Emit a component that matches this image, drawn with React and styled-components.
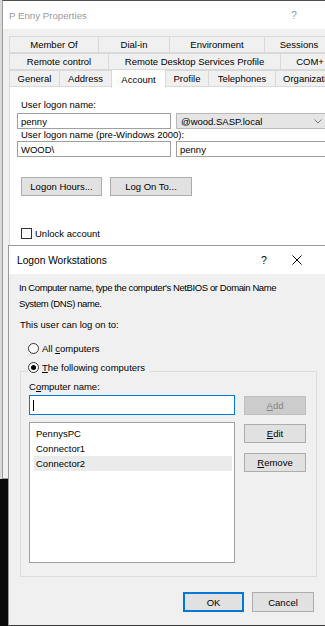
import React from "react";
import styled, { createGlobalStyle } from "styled-components";

const Global = createGlobalStyle`
  html, body { margin: 0; padding: 0; background: #0a0a0a; }
  body { font-family: "Liberation Sans", Arial, sans-serif; font-size: 9.5px; color: #000; }
  * { box-sizing: border-box; }
`;

const Desktop = styled.div`
  position: relative;
  width: 325px;
  height: 626px;
  overflow: hidden;
  background: linear-gradient(to bottom, #d9d9d9 0, #d9d9d9 479px, #0a0a0a 479px);
`;

const PropsWindow = styled.div`
  position: absolute;
  left: 2px;
  top: 0;
  width: 345px;
  height: 479px;
  border: 1px solid #9a9a9a;
  border-top-color: #505050;
  background: #f0f0f0;
  display: flex;
  flex-direction: column;
`;

const TitleBar = styled.div`
  height: ${(p) => p.$h}px;
  flex: none;
  background: #fff;
  display: flex;
  align-items: center;
  padding-left: ${(p) => p.$pl}px;
  padding-right: ${(p) => p.$pr || 0}px;
  color: ${(p) => (p.$active ? "#000" : "#999")};
  font-size: ${(p) => p.$fs || 9.7}px;
`;

const TitleText = styled.div`
  flex: 1;
  white-space: nowrap;
`;

const TitleBtn = styled.div`
  width: ${(p) => p.$w}px;
  text-align: center;
  font-size: ${(p) => p.$fs || 10}px;
  display: flex;
  justify-content: center;
`;

const PropsBody = styled.div`
  flex: 1;
  display: flex;
  flex-direction: column;
  padding: 7px 0 0 6px;
`;

const TabRow = styled.div`
  display: flex;
  height: 17px;
  align-items: flex-end;
  position: relative;
  z-index: ${(p) => p.$z || 0};
`;

const Tab = styled.div`
  flex: none;
  width: ${(p) => p.$w}px;
  height: ${(p) => (p.$sel ? 19 : 17)}px;
  margin-left: -1px;
  margin-bottom: ${(p) => (p.$sel ? -1 : 0)}px;
  border: 1px solid #d9d9d9;
  border-bottom: ${(p) => (p.$sel ? "none" : "1px solid #d9d9d9")};
  background: ${(p) => (p.$sel ? "#fff" : "#f0f0f0")};
  display: flex;
  align-items: center;
  justify-content: center;
  white-space: nowrap;
  overflow: hidden;
  position: relative;
  z-index: ${(p) => (p.$sel ? 2 : 0)};
  &:first-child { margin-left: 0; }
`;

const Panel = styled.div`
  flex: 1;
  background: #fff;
  border: 1px solid #d9d9d9;
  margin-top: -1px;
  padding: 12px 0 0 7px;
  display: flex;
  flex-direction: column;
`;

const FieldLabel = styled.div`
  line-height: 12px;
  height: 12px;
  margin-left: ${(p) => p.$ml ?? 4}px;
  margin-bottom: ${(p) => p.$mb ?? 0}px;
  white-space: nowrap;
`;

const FieldRow = styled.div`
  display: flex;
  gap: 5px;
  margin-top: ${(p) => p.$mt || 0}px;
`;

const TextBox = styled.div`
  width: ${(p) => p.$w}px;
  height: ${(p) => p.$h || 16}px;
  border: 1px solid ${(p) => (p.$focus ? "#0078d7" : "#a0a0a0")};
  background: #fff;
  display: flex;
  align-items: center;
  padding-left: 3px;
  white-space: nowrap;
  flex: none;
`;

const Combo = styled.div`
  width: ${(p) => p.$w}px;
  height: 16px;
  border: 1px solid #b9b9b9;
  background: #e5e5e5;
  display: flex;
  align-items: center;
  padding: 0 6px 0 4px;
  flex: none;
  white-space: nowrap;
  span { flex: 1; }
`;

const ButtonRow = styled.div`
  display: flex;
  gap: ${(p) => p.$gap}px;
  margin-top: ${(p) => p.$mt || 0}px;
  margin-left: ${(p) => p.$ml || 0}px;
  justify-content: ${(p) => p.$justify || "flex-start"};
  padding-right: ${(p) => p.$pr || 0}px;
  width: ${(p) => (p.$w ? `${p.$w}px` : "auto")};
`;

const WinButton = styled.div`
  width: ${(p) => p.$w}px;
  height: ${(p) => p.$h || 19}px;
  flex: none;
  background: ${(p) => (p.$disabled ? "#cccccc" : "#e1e1e1")};
  border: 1px solid ${(p) => (p.$disabled ? "#bfbfbf" : p.$default ? "#0078d7" : "#adadad")};
  box-shadow: ${(p) => (p.$default ? "inset 0 0 0 1px #0078d7" : "none")};
  color: ${(p) => (p.$disabled ? "#838383" : "#000")};
  display: flex;
  align-items: center;
  justify-content: center;
  white-space: nowrap;
`;

const CheckRow = styled.div`
  display: flex;
  align-items: center;
  gap: 3px;
  margin-top: ${(p) => p.$mt || 0}px;
  margin-left: 4px;
  height: 12px;
`;

const CheckBox = styled.div`
  width: 11px;
  height: 11px;
  border: 1px solid #333;
  background: #fff;
  flex: none;
`;

/* ---- Dialog ---- */

const Dialog = styled.div`
  position: absolute;
  left: 8px;
  top: 245px;
  width: 330px;
  height: 381px;
  border: 1px solid #9a9a9a;
  border-bottom: 1px solid #3a3a3a;
  background: #f0f0f0;
  display: flex;
  flex-direction: column;
  z-index: 5;
`;

const DialogBody = styled.div`
  flex: 1;
  padding: 6px 0 0 10px;
  display: flex;
  flex-direction: column;
`;

const Para = styled.div`
  line-height: 16px;
  white-space: nowrap;
  margin-top: ${(p) => p.$mt || 0}px;
  margin-left: ${(p) => p.$ml || 0}px;
  letter-spacing: ${(p) => p.$ls || 0}px;
`;

const RadioRow = styled.label`
  display: flex;
  align-items: center;
  gap: 3px;
  height: 16px;
  margin-top: ${(p) => p.$mt || 0}px;
  margin-left: ${(p) => p.$ml || 0}px;
  white-space: nowrap;
`;

const RadioCircle = styled.span`
  width: 11px;
  height: 11px;
  border-radius: 50%;
  border: 1px solid #333;
  background: #fff;
  flex: none;
  display: flex;
  align-items: center;
  justify-content: center;
  &::after {
    content: "";
    width: 5px;
    height: 5px;
    border-radius: 50%;
    background: ${(p) => (p.$on ? "#000" : "transparent")};
  }
`;

const Group = styled.div`
  width: 297px;
  margin-left: 1px;
  margin-top: 3px;
  display: flex;
  flex-direction: column;
`;

const GroupHead = styled.div`
  display: flex;
  height: 16px;
  align-items: flex-end;
`;

const HeadLine = styled.div`
  height: 4px;
  align-self: flex-end;
  flex: ${(p) => (p.$fill ? 1 : "none")};
  width: ${(p) => (p.$w ? `${p.$w}px` : "auto")};
  margin-left: ${(p) => p.$ml || 0}px;
  border-top: 1px solid #dcdcdc;
  border-left: ${(p) => (p.$left ? "1px solid #dcdcdc" : "none")};
  border-right: ${(p) => (p.$right ? "1px solid #dcdcdc" : "none")};
`;

const GroupLegend = styled.div`
  display: flex;
  align-self: flex-start;
`;

const GroupBody = styled.div`
  border: 1px solid #dcdcdc;
  border-top: none;
  padding: 4px 9px 13px 8px;
  display: flex;
  flex-direction: column;
`;

const GroupGrid = styled.div`
  display: grid;
  grid-template-columns: 206px 62px;
  column-gap: 9px;
  row-gap: 7px;
  align-items: start;
`;

const CenterCell = styled.div`
  align-self: center;
  display: flex;
`;

const ListBox = styled.div`
  height: 141px;
  border: 1px solid #a0a0a0;
  background: #fff;
  padding: 3px 2px 0 4px;
  display: flex;
  flex-direction: column;
`;

const ListItem = styled.div`
  height: 15px;
  line-height: 15px;
  padding-left: 2px;
  background: ${(p) => (p.$sel ? "#ebebeb" : "transparent")};
  white-space: nowrap;
`;

const SideButtons = styled.div`
  display: flex;
  flex-direction: column;
  gap: 10px;
  margin-top: 2px;
`;

const Caret = styled.span`
  display: inline-block;
  width: 1px;
  height: 11px;
  background: #000;
`;

const Mn = styled.span`
  text-decoration: underline;
  text-underline-offset: 1px;
`;

const Chevron = () => (
  <svg width="8" height="5" viewBox="0 0 8 5">
    <path d="M0.5 0.5 L4 4 L7.5 0.5" fill="none" stroke="#777" strokeWidth="1" />
  </svg>
);

const Close = () => (
  <svg width="10" height="10" viewBox="0 0 10 10">
    <path d="M0.5 0.5 L9.5 9.5 M9.5 0.5 L0.5 9.5" stroke="#000" strokeWidth="1" />
  </svg>
);

const rows = [
  [
    ["Member Of", 90],
    ["Dial-in", 72],
    ["Environment", 96],
    ["Sessions", 70],
  ],
  [
    ["Remote control", 100],
    ["Remote Desktop Services Profile", 173],
    ["COM+", 60],
  ],
  [
    ["General", 51],
    ["Address", 53],
    ["Account", 55, true],
    ["Profile", 44],
    ["Telephones", 68],
    ["Organization", 70],
  ],
];

export default function App() {
  return (
    <Desktop>
      <Global />
      <PropsWindow>
        <TitleBar $h={28} $pl={6}>
          <TitleText>P Enny Properties</TitleText>
          <TitleBtn $w={24} $fs={10.5}>?</TitleBtn>
          <TitleBtn $w={40} />
        </TitleBar>
        <PropsBody>
          {rows.map((r, i) => (
            <TabRow key={i} $z={i === 2 ? 3 : 0}>
              {r.map(([t, w, sel]) => (
                <Tab key={t} $w={w} $sel={sel}>
                  {t}
                </Tab>
              ))}
            </TabRow>
          ))}
          <Panel>
            <FieldLabel $mb={2}>User logon name:</FieldLabel>
            <FieldRow>
              <TextBox $w={154}>penny</TextBox>
              <Combo $w={153}>
                <span>@wood.SASP.local</span>
                <Chevron />
              </Combo>
            </FieldRow>
            <FieldLabel>User logon name (pre-Windows 2000):</FieldLabel>
            <FieldRow>
              <TextBox $w={154}>WOOD\</TextBox>
              <TextBox $w={153}>penny</TextBox>
            </FieldRow>
            <ButtonRow $gap={8} $mt={20} $ml={4}>
              <WinButton $w={81}>Logon Hours...</WinButton>
              <WinButton $w={82}>Log On To...</WinButton>
            </ButtonRow>
            <CheckRow $mt={31}>
              <CheckBox />
              <span>Unlock account</span>
            </CheckRow>
          </Panel>
        </PropsBody>
      </PropsWindow>

      <Dialog>
        <TitleBar $h={28} $pl={8} $pr={21} $fs={10.2} $active>
          <TitleText>Logon Workstations</TitleText>
          <TitleBtn $w={28} $fs={10.5}>?</TitleBtn>
          <TitleBtn $w={38}>
            <Close />
          </TitleBtn>
        </TitleBar>
        <DialogBody>
          <Para $ls={-0.4}>
            In Computer name, type the computer's NetBIOS or Domain Name
            <br />
            System (DNS) name.
          </Para>
          <Para $mt={5} $ml={1}>This user can log on to:</Para>
          <RadioRow $mt={7} $ml={9}>
            <RadioCircle />
            <span>
              All <Mn>c</Mn>omputers
            </span>
          </RadioRow>
          <Group>
            <GroupHead>
              <HeadLine $w={8} $left />
              <GroupLegend>
                <RadioRow>
                  <RadioCircle $on />
                  <span>
                    <Mn>T</Mn>he following computers
                  </span>
                </RadioRow>
              </GroupLegend>
              <HeadLine $fill $right $ml={4} />
            </GroupHead>
            <GroupBody>
              <Para>
                C<Mn>o</Mn>mputer name:
              </Para>
              <GroupGrid>
                <TextBox $w={206} $h={20} $focus>
                  <Caret />
                </TextBox>
                <CenterCell>
                  <WinButton $w={62} $disabled>
                    <Mn>A</Mn>dd
                  </WinButton>
                </CenterCell>
                <ListBox>
                  <ListItem>PennysPC</ListItem>
                  <ListItem>Connector1</ListItem>
                  <ListItem $sel>Connector2</ListItem>
                </ListBox>
                <SideButtons>
                  <WinButton $w={62}>
                    <Mn>E</Mn>dit
                  </WinButton>
                  <WinButton $w={62}>
                    <Mn>R</Mn>emove
                  </WinButton>
                </SideButtons>
              </GroupGrid>
            </GroupBody>
          </Group>
          <ButtonRow $gap={8} $mt={15} $w={298} $justify="flex-end" $pr={3}>
            <WinButton $w={61} $h={20} $default>
              OK
            </WinButton>
            <WinButton $w={62} $h={20}>
              Cancel
            </WinButton>
          </ButtonRow>
        </DialogBody>
      </Dialog>
    </Desktop>
  );
}
